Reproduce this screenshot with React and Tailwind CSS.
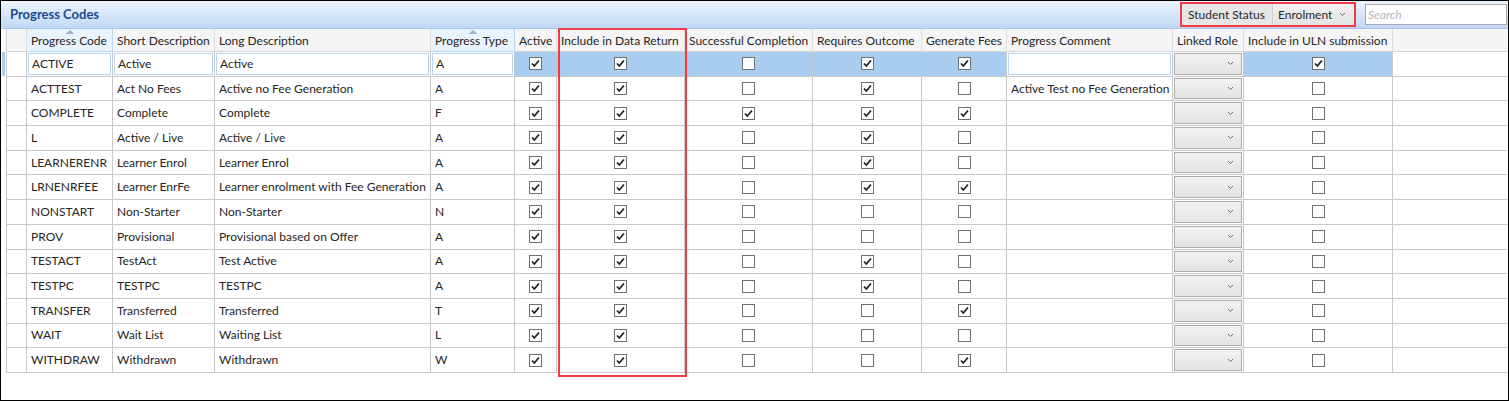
import React from "react";

const rows = [
  ["ACTIVE", "Active", "Active", "A", 1, 1, 0, 1, 1, "", 1],
  ["ACTTEST", "Act No Fees", "Active no Fee Generation", "A", 1, 1, 0, 1, 0, "Active Test no Fee Generation", 0],
  ["COMPLETE", "Complete", "Complete", "F", 1, 1, 1, 1, 1, "", 0],
  ["L", "Active / Live", "Active / Live", "A", 1, 1, 0, 1, 0, "", 0],
  ["LEARNERENR", "Learner Enrol", "Learner Enrol", "A", 1, 1, 0, 1, 0, "", 0],
  ["LRNENRFEE", "Learner EnrFe", "Learner enrolment with Fee Generation", "A", 1, 1, 0, 1, 1, "", 0],
  ["NONSTART", "Non-Starter", "Non-Starter", "N", 1, 1, 0, 0, 0, "", 0],
  ["PROV", "Provisional", "Provisional based on Offer", "A", 1, 1, 0, 0, 0, "", 0],
  ["TESTACT", "TestAct", "Test Active", "A", 1, 1, 0, 1, 0, "", 0],
  ["TESTPC", "TESTPC", "TESTPC", "A", 1, 1, 0, 1, 0, "", 0],
  ["TRANSFER", "Transferred", "Transferred", "T", 1, 1, 0, 0, 1, "", 0],
  ["WAIT", "Wait List", "Waiting List", "L", 1, 1, 0, 0, 0, "", 0],
  ["WITHDRAW", "Withdrawn", "Withdrawn", "W", 1, 1, 0, 0, 1, "", 0],
];

const headers = [
  ["", false],
  ["Progress Code", true],
  ["Short Description", false],
  ["Long Description", false],
  ["Progress Type", true],
  ["Active", false],
  ["Include in Data Return", false],
  ["Successful Completion", false],
  ["Requires Outcome", false],
  ["Generate Fees", false],
  ["Progress Comment", false],
  ["Linked Role", false],
  ["Include in ULN submission", false],
  ["", false],
];

const cols = "grid-cols-[21px_86px_102px_216px_84px_42px_128px_128px_109px_85px_166px_71px_149px_1fr]";

const Chevron = () => (
  <svg width="7" height="5" viewBox="0 0 7 5">
    <path d="M1 1 L3.5 3.5 L6 1" fill="none" stroke="#6a6a6a" strokeWidth="1" />
  </svg>
);

const Check = ({ on }) => (
  <div className="w-[13px] h-[13px] border border-[#707070] bg-white flex items-center justify-center">
    {on ? (
      <svg width="11" height="11" viewBox="0 0 11 11">
        <path d="M2 5.5 L4.3 8 L9 2.5" fill="none" stroke="#222" strokeWidth="1.8" />
      </svg>
    ) : null}
  </div>
);

const TextCell = ({ text, sel }) => (
  <div className="border-r border-b border-[#c9c9c9] flex items-stretch min-w-0">
    {sel ? (
      <div className="flex-1 m-[1px] bg-white border border-[#b9d6f2] flex items-center px-[3px] whitespace-nowrap overflow-hidden">{text}</div>
    ) : (
      <div className="flex-1 flex items-center px-[4px] whitespace-nowrap overflow-hidden">{text}</div>
    )}
  </div>
);

const CheckCell = ({ on, sel }) => (
  <div className={`border-r border-b border-[#c9c9c9] flex items-center justify-center ${sel ? "bg-[#a9cdf0]" : ""}`}>
    <Check on={on} />
  </div>
);

export default function App() {
  return (
    <div
      className="w-[1509px] h-[401px] bg-white border border-black relative overflow-hidden text-[12px] text-[#262626]"
      style={{ fontFamily: "Lato, 'Noto Sans', sans-serif" }}
    >
      <div className="h-[28px] bg-gradient-to-b from-[#edf5fe] to-[#c0d8f5] border-b border-[#a9c4e6] flex items-center pl-[9px] pr-[1px]">
        <span className="font-bold text-[13px] text-[#1d4b8f]">Progress Codes</span>
        <div className="ml-auto flex items-center">
          <div className="flex items-stretch border-2 border-[#ef3b45] h-[25px] whitespace-nowrap">
            <div className="bg-[#e6e6e6] flex items-center px-[6px] w-[91px] border-r border-[#cfcfcf]">Student Status</div>
            <div className="bg-gradient-to-b from-[#f2f2f2] to-[#e3e3e3] flex items-center pl-[5px] pr-[8px] w-[81px] justify-between">
              <span>Enrolment</span>
              <Chevron />
            </div>
          </div>
          <div className="ml-[9px] w-[142px] h-[21px] bg-white border border-[#a9a9a9] flex items-center px-[2px] italic text-[#b5b5b5]">Search</div>
        </div>
      </div>

      <div className="pl-[5px]">
        <div className={`grid ${cols} h-[23px] bg-[#f5f5f5]`}>
          {headers.map(([h, sorted], i) => (
            <div
              key={i}
              className={`relative flex items-center pt-[2px] px-[4px] border-b border-[#d5d5d5] ${i === 0 ? "border-l border-[#cfcfcf]" : ""} ${i < 13 ? "border-r" : ""} ${sorted ? "bg-[#e8f3fc] border-r-[#b8d6f0] border-b-[#b8d6f0]" : "border-r-[#dedede]"} whitespace-nowrap`}
            >
              {sorted ? (
                <svg className="absolute left-1/2 -translate-x-1/2 top-[1px]" width="9" height="4" viewBox="0 0 9 4">
                  <path d="M0 4 L4.5 0 L9 4 Z" fill="#9bb3cc" />
                </svg>
              ) : null}
              {h}
            </div>
          ))}
        </div>

        {rows.map((r, ri) => {
          const sel = ri === 0;
          return (
            <div key={ri} className={`grid ${cols} h-[24.7px]`}>
              <div className="border-l border-r border-b border-[#c9c9c9] relative">
                {sel ? <div className="absolute -left-[5px] top-0 bottom-0 w-[3px] bg-[#a9cdf0]" /> : null}
              </div>
              <TextCell text={r[0]} sel={sel} />
              <TextCell text={r[1]} sel={sel} />
              <TextCell text={r[2]} sel={sel} />
              <TextCell text={r[3]} sel={sel} />
              <CheckCell on={r[4]} sel={sel} />
              <CheckCell on={r[5]} sel={sel} />
              <CheckCell on={r[6]} sel={sel} />
              <CheckCell on={r[7]} sel={sel} />
              <CheckCell on={r[8]} sel={sel} />
              <TextCell text={r[9]} sel={sel} />
              <div className="border-r border-b border-[#c9c9c9] flex items-stretch">
                <div className="flex-1 m-[1px] border border-[#adadad] bg-gradient-to-b from-[#f2f2f2] to-[#e4e4e4] flex items-center justify-end pr-[7px]">
                  <Chevron />
                </div>
              </div>
              <CheckCell on={r[10]} sel={sel} />
              <div className="border-b border-[#c9c9c9]" />
            </div>
          );
        })}
      </div>

      <div className="absolute left-[557px] top-[27px] w-[129px] h-[349px] border-2 border-[#ef3b45] pointer-events-none" />
    </div>
  );
}
